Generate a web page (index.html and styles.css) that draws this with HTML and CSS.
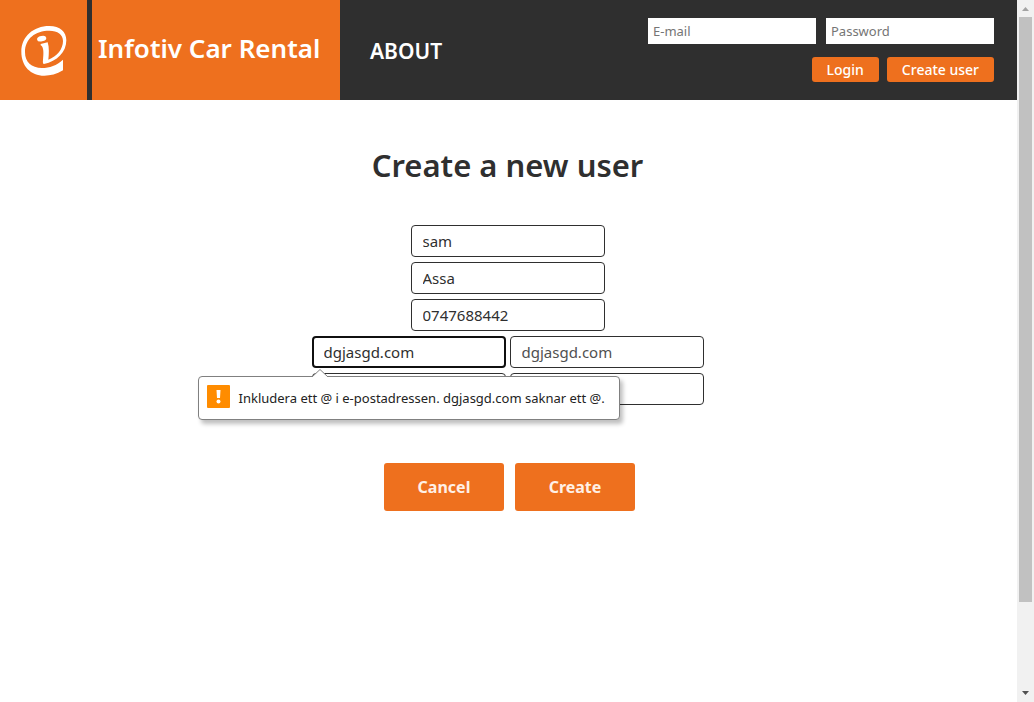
FILE: index.html
```html
<!DOCTYPE html>
<html lang="en">
<head>
<meta charset="utf-8">
<title>Infotiv Car Rental</title>
<link rel="stylesheet" href="styles.css">
</head>
<body>
<div class="page">
  <header class="header">
    <a class="logo" href="#" aria-label="Infotiv">
      <svg class="logo-mark" viewBox="0 0 210 240" aria-hidden="true">
        <path fill="#fff" fill-rule="evenodd" d="M159 149V181C140 193 121 197 103 197C62 197 34 168 34 125C34 80 70 48 118 48C150 48 169 65 169 91C169 127 141 154 102 162C99 162 98 158 99 150C101 132 102 110 92 106V102L113 97C118 112 117 133 115 149C141 140 159 117 159 93C159 73 143 62 118 62C76 62 45 86 45 126C45 157 64 173 96 174C119 174 140 166 159 149Z"/>
        <ellipse fill="#fff" cx="95" cy="86" rx="14" ry="8" transform="rotate(-12 95 86)"/>
      </svg>
    </a>
    <a class="brand" href="#">Infotiv Car Rental</a>
    <nav class="nav"><a class="nav-link" href="#">ABOUT</a></nav>
    <form class="login">
      <div class="login-fields">
        <input class="login-input" type="email" placeholder="E-mail" aria-label="E-mail">
        <input class="login-input" type="password" placeholder="Password" aria-label="Password">
      </div>
      <div class="login-actions">
        <button class="button button-small" type="button">Login</button>
        <button class="button button-small" type="button">Create user</button>
      </div>
    </form>
  </header>
  <main class="main">
    <h1 class="title">Create a new user</h1>
    <form class="user-form">
      <div class="row"><input class="field" type="text" value="sam" aria-label="First name"></div>
      <div class="row"><input class="field" type="text" value="Assa" aria-label="Last name"></div>
      <div class="row"><input class="field" type="tel" value="0747688442" aria-label="Phone number"></div>
      <div class="row">
        <div class="field-wrap">
          <input class="field field-active" type="text" value="dgjasgd.com" aria-label="E-mail" aria-describedby="email-error">
          <div class="bubble" id="email-error" role="alert">
            <svg class="bubble-tip" viewBox="0 0 16 8" aria-hidden="true"><path d="M0 8L8 0.5L16 8" fill="#fff" stroke="#808080"/></svg>
            <svg class="bubble-icon" viewBox="0 0 23 23" aria-hidden="true">
              <rect width="23" height="23" rx="1" fill="#ff8c00"/>
              <path d="M9.5 5h4l-.5 8h-3z" fill="#fff"/><circle cx="11.500" cy="16.500" r="2" fill="#fff"/>
            </svg>
            <span>Inkludera ett @ i e-postadressen. dgjasgd.com saknar ett @.</span>
          </div>
        </div>
        <input class="field field-muted" type="text" value="dgjasgd.com" aria-label="Confirm e-mail">
      </div>
      <div class="row">
        <input class="field" type="password" aria-label="Password">
        <input class="field" type="password" aria-label="Confirm password">
      </div>
      <div class="form-actions">
        <button class="button button-large" type="button">Cancel</button>
        <button class="button button-large" type="button">Create</button>
      </div>
    </form>
  </main>
</div>
<div class="scrollbar" aria-hidden="true">
  <svg class="arrow" viewBox="0 0 17 17"><path d="M5 11h7L8.500 7z" fill="#a3a3a3"/></svg>
  <div class="track"><div class="thumb"></div></div>
  <svg class="arrow" viewBox="0 0 17 17"><path d="M5 6h7L8.500 10z" fill="#505050"/></svg>
</div>
</body>
</html>
```
FILE: styles.css
```css
* { box-sizing: border-box; }
body {
  display: flex;
  min-height: 100vh;
  margin: 0;
  background: #fff;
  color: #2f2f2f;
  font-family: "Noto Sans", "Open Sans", sans-serif;
}
input, button { font-family: inherit; }
.page { flex: 1; min-width: 0; }
.header { display: flex; min-height: 100px; background: #2f2f2f; }
.logo, .brand { display: flex; align-items: center; background: #ee701e; }
.logo { margin-right: 5px; padding: 0 7px 0 10px; }
.logo-mark { display: block; width: 70px; height: 80px; }
.brand {
  min-width: 248px;
  padding: 0 6px 4px;
  color: #fff;
  font-size: 26px;
  font-weight: 600;
  text-decoration: none;
  white-space: nowrap;
}
.nav { display: flex; align-items: center; padding: 2px 0 0 30px; }
.nav-link {
  color: #fff;
  font-size: 21px;
  font-weight: 600;
  text-decoration: none;
}
.login {
  display: flex;
  flex-direction: column;
  align-items: flex-end;
  gap: 13px;
  margin-left: auto;
  padding: 18px 23px 0 0;
}
.login-fields { display: flex; gap: 10px; }
.login-input {
  width: 168px;
  height: 26px;
  padding: 0 5px;
  border: 0;
  font-size: 13px;
}
.login-input::placeholder { color: #757575; }
.login-actions { display: flex; gap: 8px; }
.button {
  border: 0;
  border-radius: 3px;
  background: #ee701e;
  color: #fff;
}
.button-small { height: 25px; padding: 0 15px; font-size: 14px; font-weight: 500; }
.main { padding: 41px 2px 0 0; }
.title {
  margin: 0 0 36px;
  font-size: 31px;
  font-weight: 600;
  line-height: 48px;
  text-align: center;
}
.user-form { display: flex; flex-direction: column; gap: 5px; }
.row { display: flex; justify-content: center; gap: 4px; }
.field-wrap { position: relative; }
.field {
  display: block;
  width: 194px;
  height: 32px;
  padding: 0 11px;
  border: 1px solid #2f2f2f;
  border-radius: 4px;
  background: #fff;
  color: #2f2f2f;
  font-size: 15px;
}
.field-active { padding: 0 10px; border: 2px solid #101010; }
.field-muted { color: #505050; }
.bubble {
  position: absolute;
  top: 40px;
  left: -114px;
  z-index: 1;
  display: flex;
  align-items: center;
  gap: 9px;
  min-width: 422px;
  min-height: 44px;
  padding: 0 8px;
  border: 1px solid #808080;
  border-radius: 4px;
  background: #fff;
  box-shadow: 3px 4px 4px rgba(0, 0, 0, 0.25);
  color: #222;
  font-size: 13px;
  white-space: nowrap;
}
.bubble-tip { position: absolute; top: -8px; left: 113px; width: 16px; height: 8px; }
.bubble-icon { width: 23px; height: 23px; margin-bottom: 3px; }
.form-actions {
  display: flex;
  justify-content: center;
  gap: 11px;
  padding: 53px 0 0 4px;
}
.button-large { width: 120px; height: 48px; font-size: 16px; font-weight: 700; color: #fff0e6; }
.scrollbar {
  display: flex;
  flex-direction: column;
  width: 17px;
  background: #f1f1f1;
}
.arrow { display: block; width: 17px; height: 17px; }
.track { flex: 1; padding: 0 2px; }
.thumb { height: 87.5%; background: #c1c1c1; }
```
